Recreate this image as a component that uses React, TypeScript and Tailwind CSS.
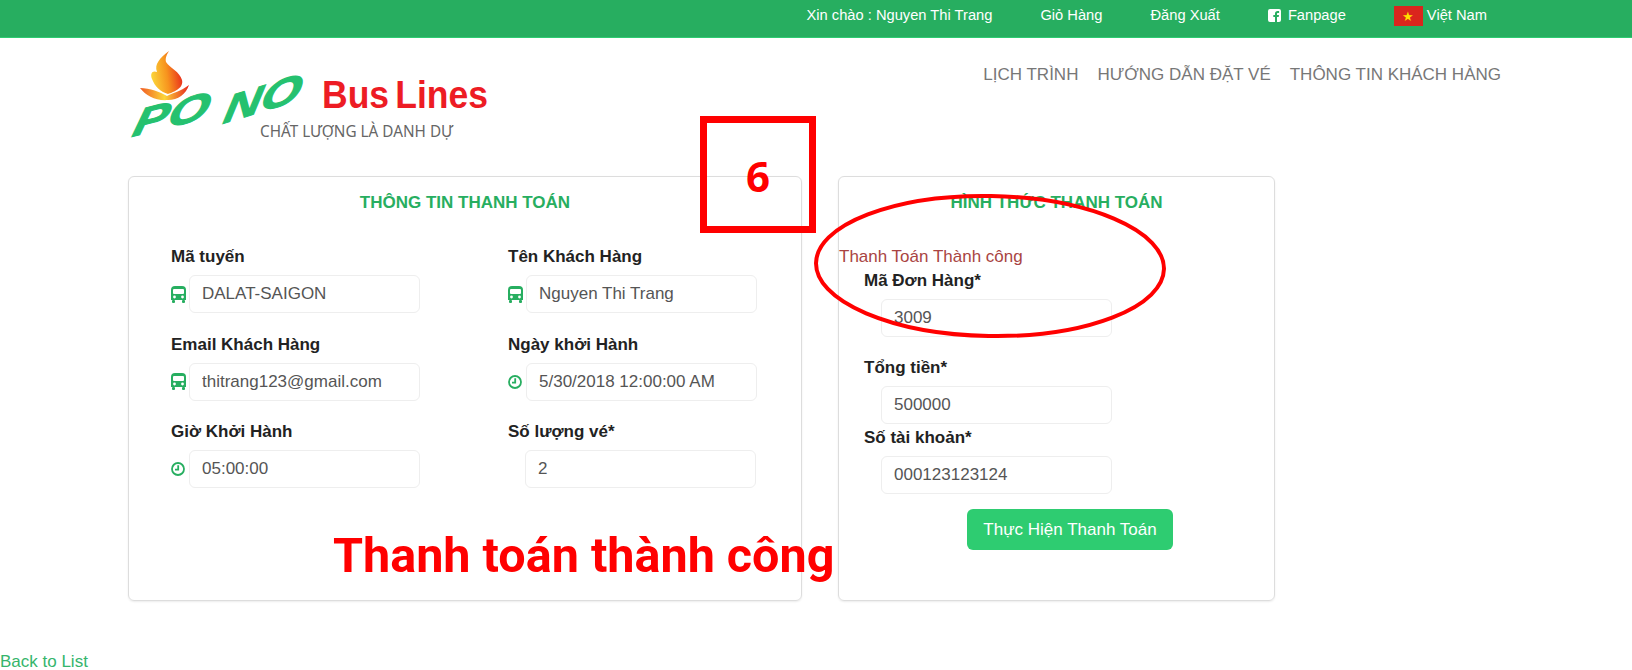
const BusIcon = () => (
  <svg width="15" height="17" viewBox="0 0 15 17" className="block" fill="#27ae60">
    <path d="M4 0h7a4 4 0 0 1 4 4v10H0V4a4 4 0 0 1 4-4Z" />
    <rect x="1" y="14" width="3" height="3" rx="1" />
    <rect x="11" y="14" width="3" height="3" rx="1" />
    <rect x="2" y="3" width="11" height="5" rx="1" fill="#ffffff" />
    <circle cx="3.5" cy="11" r="1.4" fill="#ffffff" />
    <circle cx="11.5" cy="11" r="1.4" fill="#ffffff" />
  </svg>
);

const ClockIcon = () => (
  <svg width="14" height="14" viewBox="0 0 14 14" className="block" fill="none" stroke="#27ae60" strokeWidth="1.8">
    <circle cx="7" cy="7" r="6" />
    <path d="M7.2 3.2V7.6H4" />
  </svg>
);

const FacebookIcon = () => (
  <svg width="13" height="13" viewBox="0 0 13 13" className="block">
    <path
      fill="#ffffff"
      fillRule="evenodd"
      d="M2 0h9a2 2 0 0 1 2 2v9a2 2 0 0 1-2 2H9V8h1.7l.3-2H9V4.900c0-.6.2-1 1-1h1.100V2.100C10.800 2 10.200 2 9.600 2 8 2 7 3 7 4.600V6H5.300v2H7v5H2a2 2 0 0 1-2-2V2a2 2 0 0 1 2-2Z"
    />
  </svg>
);

const Logo = () => (
  <svg width="370" height="104" viewBox="0 0 370 104" className="block overflow-visible">
    <defs>
      <linearGradient id="flame" x1="0" y1="0.6" x2="1" y2="0.4">
        <stop offset="0" stopColor="#fbd63a" />
        <stop offset="0.5" stopColor="#f7931e" />
        <stop offset="1" stopColor="#e8261c" />
      </linearGradient>
      <linearGradient id="wing" x1="0" y1="0" x2="1" y2="0">
        <stop offset="0" stopColor="#f15a24" />
        <stop offset="0.5" stopColor="#fbd63a" />
        <stop offset="1" stopColor="#e8261c" />
      </linearGradient>
    </defs>
    {/* flame */}
    <path d="M39 5C30 12 24 18 27 26C22 24 20 28 22 33C25 41 31 46 38 48C44 46 54 42 52 34C50 26 40 22 36 16C35 12 37 8 39 5Z" fill="url(#flame)" />
    <path d="M10 42C20 42 30 46 37 50C42 47 50 46 59 39C56 48 48 54 38 54C26 55 16 50 10 42Z" fill="url(#wing)" />
    {/* po no */}
    <text transform="translate(1 91) rotate(-14) skewX(-28) scale(1.5 1)" fontFamily="Liberation Sans, sans-serif" fontWeight="700" fontStyle="italic" fontSize="36" fill="#25c16f" stroke="#25c16f" strokeWidth="1">PO</text>
    <text transform="translate(92 78) rotate(-17) skewX(-28) scale(1.5 1)" fontFamily="Liberation Sans, sans-serif" fontWeight="700" fontStyle="italic" fontSize="36" fill="#25c16f" stroke="#25c16f" strokeWidth="1">NO</text>
    <text x="192" y="62" fontFamily="Liberation Sans, sans-serif" fontWeight="700" fontSize="38" wordSpacing="-4" fill="#ed1c24" textLength="166" lengthAdjust="spacingAndGlyphs">Bus Lines</text>
    <text x="130" y="91" fontFamily="Noto Sans, sans-serif" fontSize="17" fill="#666666" textLength="193" lengthAdjust="spacingAndGlyphs">CHẤT LƯỢNG LÀ DANH DỰ</text>
  </svg>
);

const Field = ({ label, value, icon }: { label: string; value: string; icon?: "bus" | "clock" }) => (
  <div>
    <div className="h-5 text-[17px] leading-5 font-bold text-[#222]">{label}</div>
    <div className="mt-2 flex items-center">
      {icon ? (
        <span className="flex w-[18px] justify-start">
          {icon === "bus" ? <BusIcon /> : <ClockIcon />}
        </span>
      ) : (
        <span className="w-[17px]" />
      )}
      <input
        readOnly
        value={value}
        className="h-[38px] w-[231px] rounded-md border border-[#eeeeee] px-3 text-[17px] text-[#555] outline-none"
      />
    </div>
  </div>
);

export default function App() {
  return (
    <div className="relative h-[670px] overflow-hidden bg-white font-['Liberation_Sans',sans-serif]">
      <div className="flex h-[38px] items-start justify-end gap-[48px] border-b border-[#2ecc71] bg-[#27ae60] pt-[6px] pr-[145px] text-[14.7px] leading-[19px] text-white">
        <span>Xin chào : Nguyen Thi Trang</span>
        <span>Giỏ Hàng</span>
        <span>Đăng Xuất</span>
        <span className="flex items-center gap-[7px]">
          <FacebookIcon />
          Fanpage
        </span>
        <span className="flex items-start gap-[4px]">
          <span className="flex h-[20px] w-[29px] items-center justify-center bg-[#da251d] text-[13px] leading-none text-[#ffde00]">★</span>
          <span>Việt Nam</span>
        </span>
      </div>

      <div className="flex h-[138px] items-start justify-between pr-[131px] pl-[130px]">
        <div className="pt-[8px]">
          <Logo />
        </div>
        <nav className="flex gap-[19px] pt-[27px] text-[17px] leading-5 text-[#777]">
          <span>LỊCH TRÌNH</span>
          <span>HƯỚNG DẪN ĐẶT VÉ</span>
          <span>THÔNG TIN KHÁCH HÀNG</span>
        </nav>
      </div>

      <div className="flex gap-[36px] pl-[128px]">
        <section className="h-[425px] w-[674px] rounded-md border border-[#dddddd] shadow-[0_1px_2px_rgba(0,0,0,0.08)]">
          <h2 className="pt-[16px] text-center text-[17px] leading-5 font-bold text-[#27ae60]">THÔNG TIN THANH TOÁN</h2>
          <div className="mt-[34px] grid grid-cols-[337px_250px] gap-y-[21.5px] pl-[42px]">
            <Field label="Mã tuyến" value="DALAT-SAIGON" icon="bus" />
            <Field label="Tên Khách Hàng" value="Nguyen Thi Trang" icon="bus" />
            <Field label="Email Khách Hàng" value="thitrang123@gmail.com" icon="bus" />
            <Field label="Ngày khởi Hành" value="5/30/2018 12:00:00 AM" icon="clock" />
            <Field label="Giờ Khởi Hành" value="05:00:00" icon="clock" />
            <Field label="Số lượng vé*" value="2" />
          </div>
        </section>

        <section className="h-[425px] w-[437px] rounded-md border border-[#dddddd] shadow-[0_1px_2px_rgba(0,0,0,0.08)]">
          <h2 className="pt-[16px] text-center text-[17px] leading-5 font-bold text-[#27ae60]">HÌNH THỨC THANH TOÁN</h2>
          <div className="mt-[34px] text-[17px] leading-5 text-[#a94442]">Thanh Toán Thành công</div>
          <div className="mt-[4px] flex flex-col pl-[25px]">
            <Field label="Mã Đơn Hàng*" value="3009" />
            <div className="mt-[21px]">
              <Field label="Tổng tiền*" value="500000" />
            </div>
            <div className="mt-[4px]">
              <Field label="Số tài khoản*" value="000123123124" />
            </div>
          </div>
          <div className="mt-[15px] flex pl-[128px]">
            <button className="h-[41px] w-[206px] rounded-md bg-[#2ecc71] text-[17px] text-white">Thực Hiện Thanh Toán</button>
          </div>
        </section>
      </div>

      <a className="mt-[51px] block text-[17px] leading-5 text-[#35b56c]">Back to List</a>

      {/* annotations pasted over the screenshot */}
      <div className="absolute top-[116px] left-[700px] flex h-[117px] w-[116px] items-center justify-center border-[7px] border-[#ff0000] pt-[2px] font-['Open_Sans',sans-serif] text-[42px] font-bold text-[#ff0000]">
        6
      </div>
      <svg className="absolute top-[190px] left-[808px]" width="364" height="152" viewBox="0 0 364 152" fill="none">
        <ellipse cx="182" cy="76" rx="174" ry="70" stroke="#ff0000" strokeWidth="4" transform="rotate(1 182 76)" />
      </svg>
      <div className="absolute top-[526px] left-[333px] font-['Roboto',sans-serif] text-[48.5px] leading-[60px] font-bold whitespace-nowrap text-[#ff0000]">
        Thanh toán thành công
      </div>
    </div>
  );
}
